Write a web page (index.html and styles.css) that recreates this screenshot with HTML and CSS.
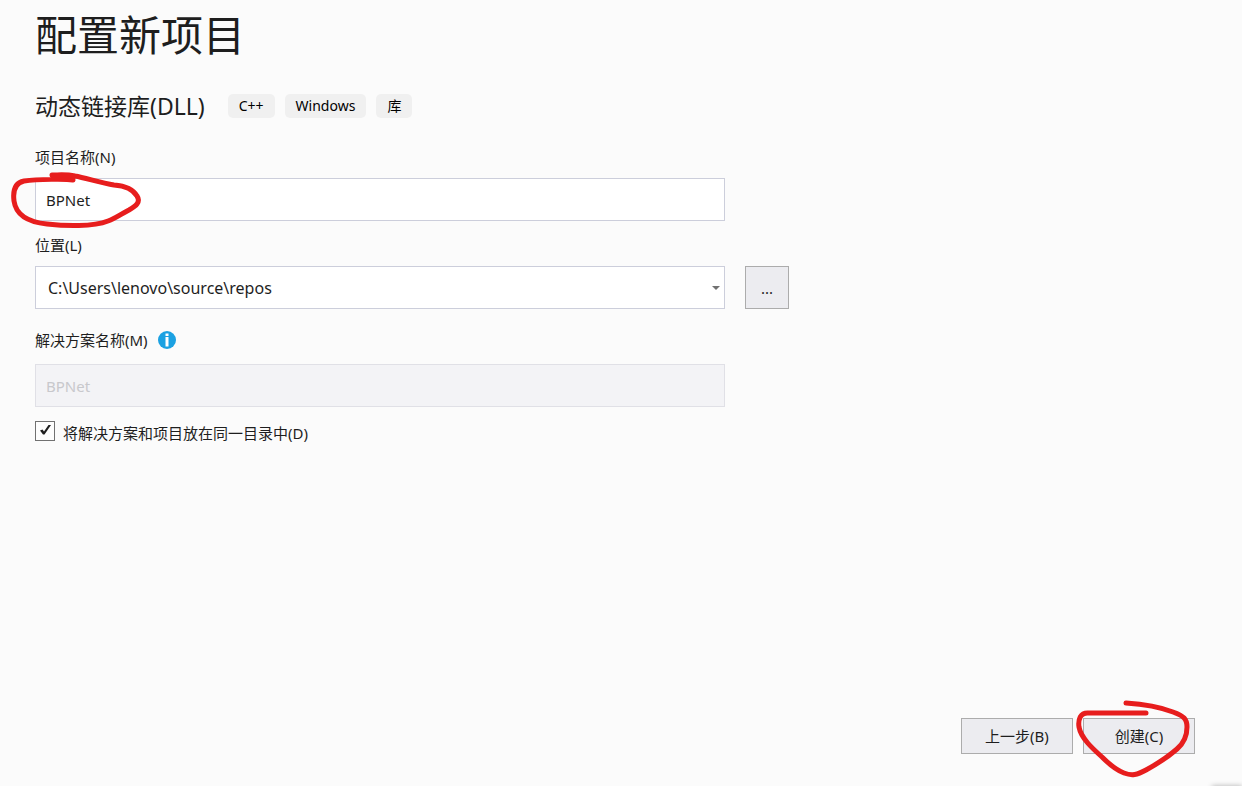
FILE: index.html
```html
<!DOCTYPE html>
<html lang="zh-CN">
<head>
<meta charset="utf-8">
<title>配置新项目</title>
<link rel="stylesheet" href="styles.css">
</head>
<body>
<form class="page">
  <main class="content">
    <h1 class="title">配置新项目</h1>
    <div class="template">
      <h2 class="template-name">动态链接库(DLL)</h2>
      <ul class="tags">
        <li class="tag">C++</li>
        <li class="tag">Windows</li>
        <li class="tag">库</li>
      </ul>
    </div>

    <div class="field">
      <label class="label" for="project">项目名称(N)</label>
      <div class="control marked">
        <input class="box" id="project" type="text" value="BPNet">
        <svg class="mark mark-name" viewBox="0 0 130 60" aria-hidden="true">
          <path d="M63 10C57 9 28 9 14 11C4 13 3 23 4 31C6 45 17 52 37 54C55 56 83 57 98 51C106 48 111 44 119 40C126 36 131 32 127 26C123 19 116 16 104 15C91 13 76 8 65 6C56 4 49 5 42 5"/>
        </svg>
      </div>
    </div>

    <div class="field">
      <label class="label" for="location">位置(L)</label>
      <div class="row">
        <div class="control">
          <select class="box select" id="location">
            <option>C:\Users\lenovo\source\repos</option>
          </select>
          <svg class="arrow" viewBox="0 0 8 4" aria-hidden="true"><path d="M0 0h8L4 4z"/></svg>
        </div>
        <button class="button browse" type="button" aria-label="浏览">...</button>
      </div>
    </div>

    <div class="field solution">
      <div class="label-row">
        <label class="label" for="solution">解决方案名称(M)</label>
        <svg class="info" viewBox="0 0 18 18" role="img" aria-label="信息">
          <circle cx="9" cy="9" r="9" fill="#1ba1e2"/>
          <path d="M7.500 2.500h3v2.500h-3zM7.500 6h3v9.500h-3z" fill="#fff"/>
        </svg>
      </div>
      <div class="control">
        <input class="box" id="solution" type="text" value="BPNet" disabled>
      </div>
    </div>

    <div class="check">
      <span class="check-box">
        <input class="check-input" id="same" type="checkbox" checked>
        <svg class="tick" viewBox="0 0 20 20" aria-hidden="true"><path d="M5 9.500L7.500 8.500L9 10.500L13.500 4H16L9.500 13.500H8z"/></svg>
      </span>
      <label class="check-label" for="same">将解决方案和项目放在同一目录中(D)</label>
    </div>
  </main>

  <footer class="actions">
    <button class="button" type="button">上一步(B)</button>
    <div class="marked">
      <button class="button" type="submit">创建(C)</button>
      <svg class="mark mark-create" viewBox="0 0 120 80" aria-hidden="true">
        <path d="M71 13H14C5 12 3 20 4 27C6 38 17 48 27 57C34 64 41 70 49 73C57 76 62 75 71 70C82 64 94 56 102 49C109 43 112 34 112 27C112 19 109 16 98 12C85 7 67 4 51 3"/>
      </svg>
    </div>
  </footer>
  <div class="corner"></div>
</form>
</body>
</html>
```
FILE: styles.css
```css
* {
  box-sizing: border-box;
}

body {
  margin: 0;
  background: #fbfbfb;
  color: #1e1e1e;
  font: 15px/20px "Noto Sans", "Noto Sans CJK SC", sans-serif;
}

.page {
  position: relative;
  display: flex;
  flex-direction: column;
  min-height: 100vh;
  padding: 8px 47px 32px 35px;
  overflow: hidden;
}

.content {
  flex: 1;
}

.title {
  margin: 0;
  font-size: 42px;
  font-weight: 400;
  line-height: 54px;
}

.template {
  display: flex;
  align-items: center;
  gap: 23px;
  margin-top: 28px;
}

.template-name {
  margin: 0;
  font-size: 23px;
  font-weight: 400;
  line-height: 32px;
}

.tags {
  display: flex;
  gap: 10px;
  margin: 0;
  padding: 0;
  list-style: none;
}

.tag {
  padding: 0 11px;
  border-radius: 5px;
  background: #f0f0f0;
  color: #000;
  font-size: 14px;
  line-height: 24px;
}

.field {
  margin-top: 14px;
}

.template + .field {
  margin-top: 25px;
}

.label {
  display: block;
  margin-bottom: 11px;
}

.solution {
  margin-top: 21px;
}

.label-row {
  display: flex;
  gap: 10px;
  align-items: flex-start;
  margin-bottom: 3px;
}

.info {
  width: 18px;
  height: 18px;
  margin-top: 1px;
}

.row {
  display: flex;
  gap: 20px;
}

.control {
  position: relative;
  flex: 0 1 690px;
  max-width: 690px;
}

.box {
  display: block;
  width: 100%;
  height: 43px;
  padding: 0 10px;
  border: 1px solid #cccedb;
  border-radius: 0;
  background: #fff;
  color: #1e1e1e;
  font: inherit;
  outline: none;
}

.box:disabled {
  border-color: #e0e0e6;
  background: #f3f3f6;
  color: #c8c8cc;
}

.select {
  padding: 0 28px 0 12px;
  font-size: 16px;
  appearance: none;
}

.arrow {
  position: absolute;
  top: 20px;
  right: 5px;
  width: 8px;
  height: 4px;
  fill: #717171;
  pointer-events: none;
}

.button {
  display: block;
  width: 112px;
  height: 36px;
  padding: 0;
  border: 1px solid #acacac;
  background: #ececf0;
  color: #1e1e1e;
  font: inherit;
}

.browse {
  width: 44px;
  height: 43px;
}

.check {
  display: flex;
  gap: 8px;
  align-items: flex-start;
  margin-top: 14px;
}

.check-box {
  position: relative;
  width: 20px;
  height: 20px;
}

.check-input {
  display: block;
  width: 20px;
  height: 20px;
  margin: 0;
  border: 1px solid #717171;
  background: #fdfdfd;
  appearance: none;
}

.tick {
  position: absolute;
  inset: 0;
  fill: #1e1e1e;
  pointer-events: none;
  visibility: hidden;
}

.check-input:checked + .tick {
  visibility: visible;
}

.check-label {
  line-height: 24px;
}

.actions {
  display: flex;
  justify-content: flex-end;
  gap: 10px;
}

.marked {
  position: relative;
}

.mark {
  position: absolute;
  overflow: visible;
  fill: none;
  stroke: #e71d1d;
  stroke-width: 5px;
  stroke-linecap: round;
  stroke-linejoin: round;
  pointer-events: none;
}

.mark-name {
  top: -8px;
  left: -25px;
  width: 130px;
  height: 60px;
}

.mark-create {
  top: -18px;
  left: -8px;
  width: 120px;
  height: 80px;
}

.corner {
  position: absolute;
  right: 0;
  bottom: -4px;
  width: 30px;
  height: 4px;
  box-shadow: 0 0 5px #aaa;
}
```
